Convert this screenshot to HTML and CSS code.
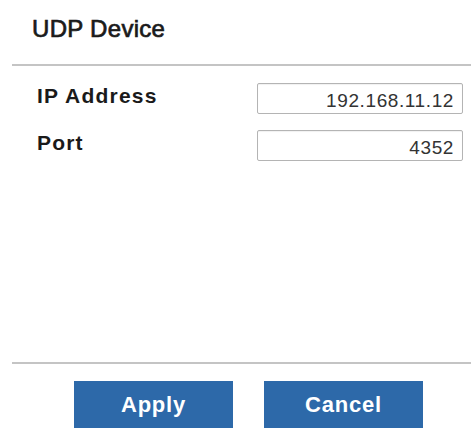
FILE: index.html
```html
<!DOCTYPE html>
<html>
<head>
<meta charset="utf-8">
<link rel="stylesheet" href="styles.css">
</head>
<body>
<div class="dialog">
  <h1 class="title">UDP Device</h1>
  <div class="rule"></div>
  <div class="fields">
    <div class="row">
      <label class="label">IP Address</label>
      <input class="field" type="text" value="192.168.11.12" readonly>
    </div>
    <div class="row">
      <label class="label">Port</label>
      <input class="field" type="text" value="4352" readonly>
    </div>
  </div>
  <div class="rule"></div>
  <div class="actions">
    <button class="btn">Apply</button>
    <button class="btn">Cancel</button>
  </div>
</div>
</body>
</html>
```
FILE: styles.css
```css
html, body {
  margin: 0;
  padding: 0;
  background: #ffffff;
  overflow: hidden;
}
body {
  font-family: "Liberation Sans", Arial, sans-serif;
  color: #222;
}
.dialog {
  display: flex;
  flex-direction: column;
  padding: 0 5px 0 12px;
  width: 459px;
}
.title {
  margin: 15px 0 0 20px;
  font-size: 24px;
  line-height: 28px;
  font-weight: normal;
  letter-spacing: 0.3px;
  color: #1a1a1a;
  -webkit-text-stroke: 0.7px #1a1a1a;
}
.rule {
  height: 2px;
  background: #c4c4c4;
  margin-top: 21px;
}
.fields {
  display: flex;
  flex-direction: column;
  gap: 16px;
  padding: 17px 0 0 25px;
  height: 296px;
  box-sizing: border-box;
}
.fields + .rule {
  margin-top: 0;
}
.row {
  display: flex;
  align-items: flex-start;
}
.label {
  width: 220px;
  padding-top: 1px;
  font-size: 21px;
  line-height: 24px;
  font-weight: bold;
  letter-spacing: 1.2px;
  color: #1a1a1a;
}
.field {
  box-sizing: border-box;
  width: 206px;
  height: 31px;
  margin: 0;
  padding: 4px 8px 0 8px;
  border: 1px solid #b4b4b4;
  border-radius: 2px;
  box-shadow: inset 0 1px 1px rgba(0,0,0,0.06);
  background: #fff;
  font-family: "Liberation Sans", Arial, sans-serif;
  font-size: 19px;
  letter-spacing: 0.6px;
  color: #333;
  text-align: right;
  outline: none;
}
.actions {
  display: flex;
  gap: 31px;
  padding: 17px 0 0 62px;
}
.btn {
  width: 159px;
  height: 48px;
  margin: 0;
  padding: 0;
  border: none;
  border-radius: 0;
  background: #2d69a9;
  color: #fff;
  font-family: "Liberation Sans", Arial, sans-serif;
  font-size: 22px;
  font-weight: bold;
  letter-spacing: 0.8px;
}
```
